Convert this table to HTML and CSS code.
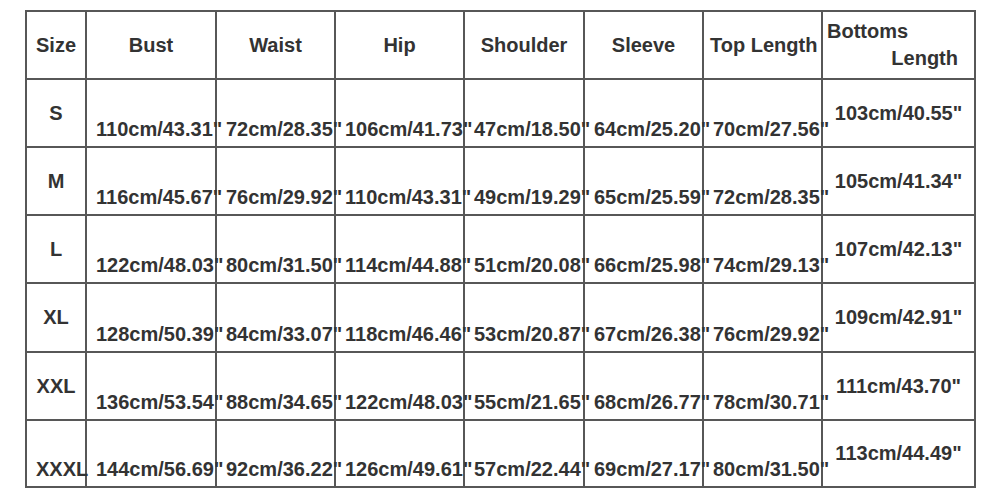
FILE: index.html
```html
<!DOCTYPE html>
<html lang="en">
<head>
<meta charset="utf-8">
<title>Size Chart</title>
<link rel="stylesheet" href="styles.css">
</head>
<body>
<div class="page">
<table class="chart">
  <thead>
    <tr>
      <th class="c-size">Size</th>
      <th class="c-bust">Bust</th>
      <th class="c-waist">Waist</th>
      <th class="c-hip">Hip</th>
      <th class="c-shoulder">Shoulder</th>
      <th class="c-sleeve">Sleeve</th>
      <th class="c-top">Top Length</th>
      <th class="c-bottoms"><span class="l1">Bottoms</span><span class="l2">Length</span></th>
    </tr>
  </thead>
  <tbody>
    <tr>
      <td class="size">S</td>
      <td class="val">110cm/43.31"</td><td class="val">72cm/28.35"</td><td class="val">106cm/41.73"</td><td class="val">47cm/18.50"</td><td class="val">64cm/25.20"</td><td class="val">70cm/27.56"</td>
      <td class="mid">103cm/40.55"</td>
    </tr>
    <tr>
      <td class="size">M</td>
      <td class="val">116cm/45.67"</td><td class="val">76cm/29.92"</td><td class="val">110cm/43.31"</td><td class="val">49cm/19.29"</td><td class="val">65cm/25.59"</td><td class="val">72cm/28.35"</td>
      <td class="mid">105cm/41.34"</td>
    </tr>
    <tr>
      <td class="size">L</td>
      <td class="val">122cm/48.03"</td><td class="val">80cm/31.50"</td><td class="val">114cm/44.88"</td><td class="val">51cm/20.08"</td><td class="val">66cm/25.98"</td><td class="val">74cm/29.13"</td>
      <td class="mid">107cm/42.13"</td>
    </tr>
    <tr>
      <td class="size">XL</td>
      <td class="val">128cm/50.39"</td><td class="val">84cm/33.07"</td><td class="val">118cm/46.46"</td><td class="val">53cm/20.87"</td><td class="val">67cm/26.38"</td><td class="val">76cm/29.92"</td>
      <td class="mid">109cm/42.91"</td>
    </tr>
    <tr>
      <td class="size">XXL</td>
      <td class="val">136cm/53.54"</td><td class="val">88cm/34.65"</td><td class="val">122cm/48.03"</td><td class="val">55cm/21.65"</td><td class="val">68cm/26.77"</td><td class="val">78cm/30.71"</td>
      <td class="mid">111cm/43.70"</td>
    </tr>
    <tr>
      <td class="size size-low">XXXL</td>
      <td class="val">144cm/56.69"</td><td class="val">92cm/36.22"</td><td class="val">126cm/49.61"</td><td class="val">57cm/22.44"</td><td class="val">69cm/27.17"</td><td class="val">80cm/31.50"</td>
      <td class="mid">113cm/44.49"</td>
    </tr>
  </tbody>
</table>
</div>
</body>
</html>
```
FILE: styles.css
```css
html, body {
  margin: 0;
  padding: 0;
  background: #ffffff;
}

.page {
  padding: 10px 0 0 25px;
}

.chart {
  table-layout: fixed;
  width: 951px;
  border-collapse: separate;
  border-spacing: 0;
  border-top: 2px solid #575757;
  border-left: 2px solid #575757;
  font-family: "Liberation Sans", Arial, sans-serif;
  font-weight: bold;
  font-size: 20px;
  line-height: 23px;
  color: #333333;
}

.chart th,
.chart td {
  box-sizing: border-box;
  border-right: 2px solid #575757;
  border-bottom: 2px solid #575757;
  padding: 0 9px;
  text-align: center;
  white-space: nowrap;
  height: 68px;
  font-weight: bold;
}

.chart th {
  vertical-align: middle;
  padding: 0 6px;
}

.c-size { width: 60px; }
.c-bust { width: 130px; }
.c-waist { width: 119px; }
.c-hip { width: 129px; }
.c-shoulder { width: 120px; }
.c-sleeve { width: 119px; }
.c-top { width: 119px; }
.c-bottoms { width: 153px; }

.chart th.c-bottoms {
  padding: 0;
  vertical-align: top;
}

.c-bottoms .l1 {
  display: block;
  text-align: left;
  padding: 8px 0 0 4px;
}

.c-bottoms .l2 {
  display: block;
  text-align: right;
  padding: 4px 16px 0 0;
}

.chart td.size,
.chart td.mid {
  vertical-align: middle;
}

.chart td.val,
.chart td.size-low {
  vertical-align: bottom;
  padding-bottom: 5px;
}

.chart tbody tr:nth-child(4) td {
  height: 69px;
}

.chart tbody tr:nth-child(6) td {
  height: 67px;
}
```
